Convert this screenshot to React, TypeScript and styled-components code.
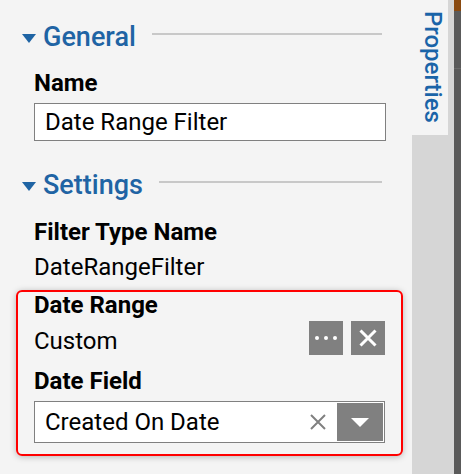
import styled, { createGlobalStyle } from "styled-components";

const GlobalStyle = createGlobalStyle`
  html, body {
    margin: 0;
    padding: 0;
    background: #f4f4f4;
    font-family: Roboto, "Liberation Sans", sans-serif;
  }
`;

export default function App() {
  return (
    <>
      <GlobalStyle />
      <Layout>
        <Panel>
          <SectionHeader>
            <Caret />
            <span>General</span>
            <Rule />
          </SectionHeader>
          <Fields $top={16}>
            <Label>Name</Label>
            <TextInput>Date Range Filter</TextInput>
          </Fields>

          <SectionHeader $top={29}>
            <Caret />
            <span>Settings</span>
            <Rule />
          </SectionHeader>
          <Fields $top={17}>
            <Label>Filter Type Name</Label>
            <Value $top={5}>DateRangeFilter</Value>
            <Highlight>
              <Label $compact>Date Range</Label>
              <ValueRow>
                <Value $top={6}>Custom</Value>
                <Buttons>
                  <IconButton aria-label="edit">
                    <svg width="22" height="4" viewBox="0 0 22 4">
                      <circle cx="2" cy="2" r="2" fill="#fff" />
                      <circle cx="11" cy="2" r="2" fill="#fff" />
                      <circle cx="20" cy="2" r="2" fill="#fff" />
                    </svg>
                  </IconButton>
                  <IconButton aria-label="clear">
                    <svg width="18" height="18" viewBox="0 0 18 18">
                      <path d="M1.5 1.5 L16.5 16.5 M16.5 1.5 L1.5 16.5" stroke="#fff" strokeWidth="3" />
                    </svg>
                  </IconButton>
                </Buttons>
              </ValueRow>
              <Label $compact $top={13}>Date Field</Label>
              <Select>
                <span>Created On Date</span>
                <ClearX>
                  <svg width="16" height="16" viewBox="0 0 16 16">
                    <path d="M1 1 L15 15 M15 1 L1 15" stroke="#808080" strokeWidth="2" />
                  </svg>
                </ClearX>
                <DropButton>
                  <svg width="18" height="9" viewBox="0 0 18 9">
                    <path d="M0 0 H18 L9 9 Z" fill="#fff" />
                  </svg>
                </DropButton>
              </Select>
            </Highlight>
          </Fields>
        </Panel>
        <TabStrip>
          <Tab>Properties</Tab>
        </TabStrip>
        <EdgeStrip />
      </Layout>
    </>
  );
}

const Layout = styled.div`
  display: flex;
  width: 461px;
  height: 474px;
  overflow: hidden;
`;

const Panel = styled.div`
  width: 412px;
  background: #f4f4f4;
  padding: 22px 26px 0 22px;
  box-sizing: border-box;
`;

const SectionHeader = styled.div<{ $top?: number }>`
  display: flex;
  align-items: center;
  height: 30px;
  margin-top: ${(p) => p.$top ?? 0}px;
  color: #1f64a4;
  font-size: 27px;
  font-weight: 500;
  & > span {
    margin-left: 7px;
  }
`;

const Caret = styled.div`
  width: 0;
  height: 0;
  border-left: 7px solid transparent;
  border-right: 7px solid transparent;
  border-top: 9px solid #1f64a4;
  margin-top: 2px;
`;

const Rule = styled.div`
  flex: 1;
  height: 2px;
  background: #c8c8c8;
  margin: -7px 4px 0 16px;
`;

const Fields = styled.div<{ $top: number }>`
  display: flex;
  flex-direction: column;
  padding-left: 12px;
  margin-top: ${(p) => p.$top}px;
`;

const Label = styled.div<{ $top?: number; $compact?: boolean }>`
  font-size: 24px;
  font-weight: 700;
  color: #000;
  line-height: ${(p) => (p.$compact ? 24 : 30)}px;
  margin-top: ${(p) => p.$top ?? 0}px;
`;

const Value = styled.div<{ $top?: number }>`
  font-size: 24px;
  color: #000;
  line-height: 30px;
  margin-top: ${(p) => p.$top ?? 0}px;
`;

const TextInput = styled.div`
  margin-top: 5px;
  height: 38px;
  box-sizing: border-box;
  border: 1px solid #808080;
  background: #fff;
  font-size: 24px;
  line-height: 36px;
  padding-left: 10px;
`;

const Highlight = styled.div`
  margin: 8px -17px 0 -18px;
  padding: 1px 16px 11px 16px;
  border: 2px solid #ff0000;
  border-radius: 6px;
  box-shadow: 0 1px 6px rgba(0, 0, 0, 0.25);
  display: flex;
  flex-direction: column;
`;

const ValueRow = styled.div`
  display: flex;
  align-items: center;
  justify-content: space-between;
  margin-top: 3px;
`;

const Buttons = styled.div`
  display: flex;
  gap: 8px;
`;

const IconButton = styled.div`
  width: 34px;
  height: 34px;
  background: #808080;
  display: flex;
  align-items: center;
  justify-content: center;
`;

const Select = styled.div`
  margin-top: 8px;
  height: 42px;
  box-sizing: border-box;
  border: 1px solid #808080;
  background: #fff;
  display: flex;
  align-items: center;
  font-size: 24px;
  & > span {
    flex: 1;
    padding-left: 10px;
  }
`;

const ClearX = styled.div`
  width: 16px;
  height: 16px;
  margin-right: 11px;
  display: flex;
`;

const DropButton = styled.div`
  width: 46px;
  height: 38px;
  margin-right: 1px;
  background: #808080;
  display: flex;
  align-items: center;
  justify-content: center;
`;

const TabStrip = styled.div`
  width: 42px;
  background: #d6d6d6;
`;

const Tab = styled.div`
  height: 135px;
  background: #f4f4f4;
  writing-mode: vertical-rl;
  font-size: 24px;
  font-weight: 500;
  line-height: 30px;
  color: #1a64a8;
  padding-top: 11px;
  padding-left: 6px;
  box-sizing: border-box;
`;

const EdgeStrip = styled.div`
  width: 7px;
  background: linear-gradient(#8a4a10 0 11px, #5a5a5a 11px 68px, #6a6a6a 68px 69px, #5a5a5a 69px);
`;
